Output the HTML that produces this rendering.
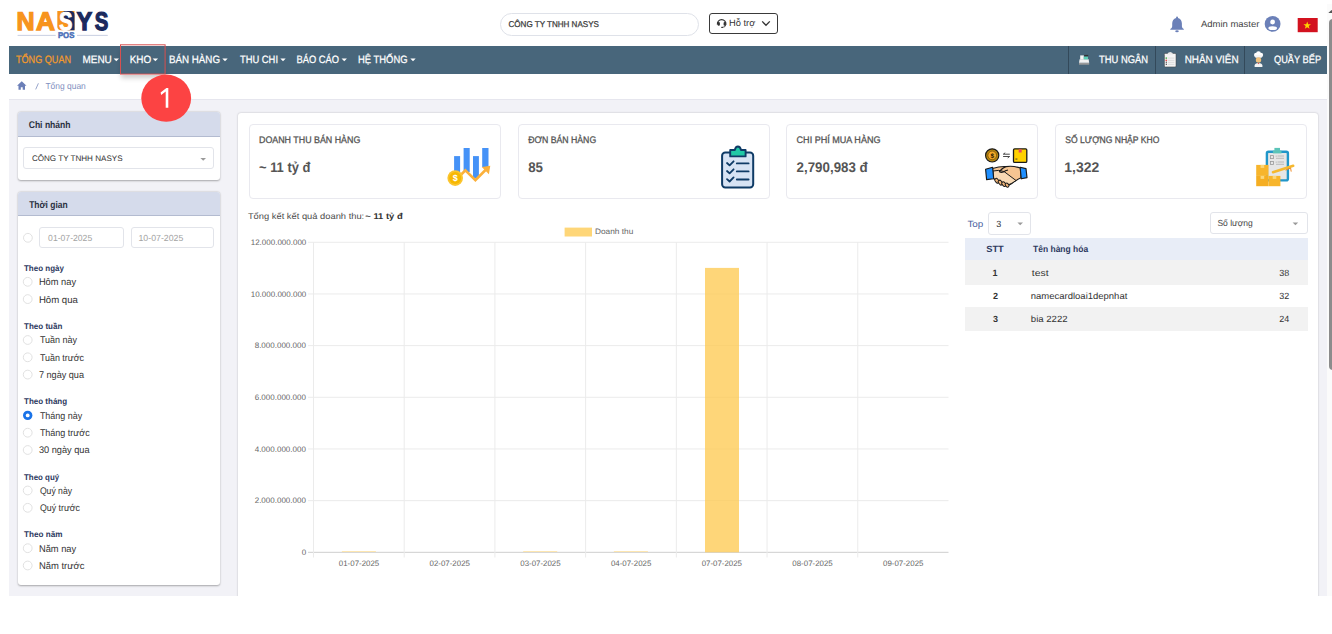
<!DOCTYPE html>
<html><head><meta charset="utf-8">
<style>
*{box-sizing:border-box;margin:0;padding:0}
html,body{width:1332px;height:634px;overflow:hidden;background:#fff;font-family:"Liberation Sans",sans-serif;color:#333}
.a{position:absolute}
.card{background:#fff;border-radius:3px;box-shadow:0 0.5px 2px rgba(0,0,0,.32)}
.ch{position:absolute;left:0;top:0;width:100%;background:#d5dbeb;border-bottom:1px solid #b3bbd0;border-radius:3px 3px 0 0}
.stat{position:absolute;top:124px;height:74.5px;border:1px solid #e9e9ef;border-radius:4px;background:#fff}
.sep{position:absolute;top:0;width:1px;height:28px;background:#33495a}
.car{position:absolute;width:0;height:0;border-left:2.5px solid transparent;border-right:2.5px solid transparent;border-top:2.7px solid #fff}
.inp{position:absolute;border:1px solid #e2e4ea;border-radius:3px;background:#fff}
svg{position:absolute;left:0;top:0;overflow:visible}
</style></head><body>

<!-- header -->
<div class="a" style="left:500px;top:13px;width:199px;height:22.5px;border:1px solid #dfe2e9;border-radius:12px"></div>
<div class="a" style="left:709px;top:13.2px;width:68.5px;height:20.5px;border:1px solid #3a3a3a;border-radius:3px"></div>

<!-- navbar -->
<div class="a" style="left:9px;top:46px;width:1318px;height:28px;background:#48667b">
 <div class="sep" style="left:1059px"></div>
 <div class="sep" style="left:1146px"></div>
 <div class="sep" style="left:1235px"></div>
</div>

<!-- content bg -->
<div class="a" style="left:9px;top:98.8px;width:1318px;height:497.4px;background:#f2f2f7;border-top:1px solid #e6e6ee"></div>
<div class="a" style="left:120.3px;top:44.5px;width:45px;height:30px;box-shadow:0 4px 5px -1px rgba(0,0,0,0.2)"></div>


<!-- sidebar cards -->
<div class="a card" style="left:17.7px;top:112.2px;width:202.4px;height:67.8px">
 <div class="ch" style="height:24.6px"></div>
 <div class="inp" style="left:5.8px;top:35px;width:191px;height:22.3px"></div>
</div>
<div class="a card" style="left:17.8px;top:192.1px;width:202.4px;height:393px">
 <div class="ch" style="height:23.5px"></div>
 <div class="inp" style="left:21.6px;top:34.7px;width:84.4px;height:21.7px"></div>
 <div class="inp" style="left:113.1px;top:34.7px;width:83.5px;height:21.7px"></div>
</div>

<!-- main panel -->
<div class="a" style="left:237.6px;top:112.9px;width:1080px;height:490px;background:#fff;border-radius:3px 3px 0 0;box-shadow:0 0 2px rgba(0,0,0,.25)"></div>
<div class="stat" style="left:249px;width:252px"></div>
<div class="stat" style="left:517.6px;width:252px"></div>
<div class="stat" style="left:785.8px;width:251.8px"></div>
<div class="stat" style="left:1054.5px;width:252.7px"></div>

<!-- table -->
<div class="inp" style="left:988.2px;top:212.3px;width:43.2px;height:22.3px"></div>
<div class="inp" style="left:1209.6px;top:212.4px;width:98px;height:22.1px"></div>
<div class="a" style="left:965px;top:237.6px;width:342.5px;height:22.5px;background:#e8edf7"></div>
<div class="a" style="left:965px;top:260.1px;width:342.5px;height:24.5px;background:#f2f2f2"></div>
<div class="a" style="left:965px;top:306.9px;width:342.5px;height:23.7px;background:#f2f2f2"></div>

<div class="a" style="left:0;top:596.2px;width:1326.5px;height:40px;background:#fff"></div>
<!-- scrollbar -->
<div class="a" style="left:1326.5px;top:3.5px;width:5.5px;height:592.5px;background:#fbfbfb"></div>
<div class="a" style="left:1329px;top:19px;width:8px;height:350.5px;background:#8c8c8c;border-radius:4px"></div>

<svg width="1332" height="634" viewBox="0 0 1332 634" style="font-family:'Liberation Sans'" text-rendering="geometricPrecision">
<line x1="308.0" y1="242.30" x2="948.5" y2="242.30" stroke="#ebebeb" stroke-width="1"/>
<line x1="308.0" y1="293.97" x2="948.5" y2="293.97" stroke="#ebebeb" stroke-width="1"/>
<line x1="308.0" y1="345.64" x2="948.5" y2="345.64" stroke="#ebebeb" stroke-width="1"/>
<line x1="308.0" y1="397.31" x2="948.5" y2="397.31" stroke="#ebebeb" stroke-width="1"/>
<line x1="308.0" y1="448.98" x2="948.5" y2="448.98" stroke="#ebebeb" stroke-width="1"/>
<line x1="308.0" y1="500.65" x2="948.5" y2="500.65" stroke="#ebebeb" stroke-width="1"/>
<line x1="308.0" y1="552.32" x2="948.5" y2="552.32" stroke="#cfcfcf" stroke-width="1"/>
<line x1="313.50" y1="242.3" x2="313.50" y2="557.5" stroke="#ebebeb" stroke-width="1"/>
<line x1="404.21" y1="242.3" x2="404.21" y2="557.5" stroke="#ebebeb" stroke-width="1"/>
<line x1="494.92" y1="242.3" x2="494.92" y2="557.5" stroke="#ebebeb" stroke-width="1"/>
<line x1="585.63" y1="242.3" x2="585.63" y2="557.5" stroke="#ebebeb" stroke-width="1"/>
<line x1="676.34" y1="242.3" x2="676.34" y2="557.5" stroke="#ebebeb" stroke-width="1"/>
<line x1="767.05" y1="242.3" x2="767.05" y2="557.5" stroke="#ebebeb" stroke-width="1"/>
<line x1="857.76" y1="242.3" x2="857.76" y2="557.5" stroke="#ebebeb" stroke-width="1"/>
<rect x="705" y="267.9" width="34" height="284.4" fill="#fec94f" fill-opacity="0.76"/>
<rect x="341.9" y="551" width="34" height="1" fill="#fde6b0"/>
<rect x="523.2" y="551" width="34" height="1" fill="#fde6b0"/>
<rect x="613.9" y="551" width="34" height="1" fill="#fde6b0"/>
<rect x="564.6" y="227.6" width="27.4" height="8.9" fill="#fed678"/>
<circle cx="27.7" cy="281.8" r="4.4" fill="#fff" stroke="#dedede" stroke-width="0.9"/>
<circle cx="27.7" cy="299.1" r="4.4" fill="#fff" stroke="#dedede" stroke-width="0.9"/>
<circle cx="27.7" cy="340.0" r="4.4" fill="#fff" stroke="#dedede" stroke-width="0.9"/>
<circle cx="27.7" cy="357.3" r="4.4" fill="#fff" stroke="#dedede" stroke-width="0.9"/>
<circle cx="27.7" cy="374.6" r="4.4" fill="#fff" stroke="#dedede" stroke-width="0.9"/>
<circle cx="27.7" cy="415.4" r="4.7" fill="#1a73e8"/><circle cx="27.7" cy="415.4" r="1.9" fill="#fff"/>
<circle cx="27.7" cy="432.7" r="4.4" fill="#fff" stroke="#dedede" stroke-width="0.9"/>
<circle cx="27.7" cy="450.0" r="4.4" fill="#fff" stroke="#dedede" stroke-width="0.9"/>
<circle cx="27.7" cy="490.5" r="4.4" fill="#fff" stroke="#dedede" stroke-width="0.9"/>
<circle cx="27.7" cy="507.8" r="4.4" fill="#fff" stroke="#dedede" stroke-width="0.9"/>
<circle cx="27.7" cy="548.2" r="4.4" fill="#fff" stroke="#dedede" stroke-width="0.9"/>
<circle cx="27.7" cy="565.5" r="4.4" fill="#fff" stroke="#dedede" stroke-width="0.9"/>
<circle cx="27.9" cy="237.8" r="4.4" fill="#fff" stroke="#dedede" stroke-width="0.9"/>
<path d="M200.39999999999998 157.9 h5.6 l-2.8 2.8z" fill="#9a9a9a"/>
<path d="M1017.4000000000001 222.5 h5.6 l-2.8 2.8z" fill="#9a9a9a"/>
<path d="M1292.6000000000001 222.5 h5.6 l-2.8 2.8z" fill="#9a9a9a"/>
<path d="M113.60 58.4 h5.4 l-2.7 2.9z" fill="#fff"/>
<path d="M152.65 58.4 h5.4 l-2.7 2.9z" fill="#fff"/>
<path d="M222.30 58.4 h5.4 l-2.7 2.9z" fill="#fff"/>
<path d="M280.30 58.4 h5.4 l-2.7 2.9z" fill="#fff"/>
<path d="M341.55 58.4 h5.4 l-2.7 2.9z" fill="#fff"/>
<path d="M410.30 58.4 h5.4 l-2.7 2.9z" fill="#fff"/>
<!-- logo -->
<path d="M57.3 10.9 H74.5 V30.3 H61.3 Q57.3 30.3 57.3 26.3 Z" fill="#f7941d"/>
<path d="M65.5 10.9 H70.5 Q74.5 10.9 74.5 14.9 V30.3 H65.5 C69.5 30.3 71.3 28 71 25.3 C70.6 22.3 63.5 20.8 61.6 18 C60.5 15.5 61.5 11.3 65.5 10.9 Z" fill="#1b2a5e"/>
<line x1="17.6" y1="35.4" x2="55.7" y2="35.4" stroke="#c3cbdf" stroke-width="0.9"/>
<line x1="77" y1="35.4" x2="107.8" y2="35.4" stroke="#c3cbdf" stroke-width="0.9"/>
<!-- hotro headset -->
<path d="M717.4 24.6 A4.3 4.3 0 1 1 725.9 24.6" fill="none" stroke="#333" stroke-width="1.1"/>
<path d="M725.9 24.6 Q725.6 27.3 722.4 27.4" fill="none" stroke="#333" stroke-width="0.8"/>
<rect x="717.6" y="21.9" width="2.3" height="3.9" rx="1" fill="#333"/>
<rect x="723.6" y="21.9" width="2.3" height="3.9" rx="1" fill="#333"/>
<rect x="721.2" y="26.7" width="1.8" height="1.2" rx="0.5" fill="#333"/>
<path d="M762.2 21.4 L766 25.3 L769.8 21.4" fill="none" stroke="#333" stroke-width="1.3"/>
<!-- bell -->
<path d="M1177 16.6 a1 1 0 0 1 1 1 v0.4 c2.6 0.7 3.9 3 3.9 5.6 v2.6 c0 1.2 0.9 2.2 1.9 2.9 v0.6 h-13.5 v-0.6 c1 -0.7 1.9 -1.7 1.9 -2.9 v-2.6 c0 -2.6 1.3 -4.9 3.9 -5.6 v-0.4 a1 1 0 0 1 0.9 -1z" fill="#6b80b8"/>
<ellipse cx="1177" cy="31.3" rx="1.8" ry="1" fill="#6b80b8"/>
<!-- avatar -->
<circle cx="1272.6" cy="23.9" r="7.9" fill="#6b80b8"/>
<circle cx="1272.6" cy="22" r="2.4" fill="#fff"/>
<ellipse cx="1272.7" cy="28.2" rx="4.3" ry="1.9" fill="#fff"/>
<!-- flag -->
<rect x="1297.7" y="18" width="20" height="14.2" fill="#d3121f"/>
<path d="M1307.20 21.60 L1308.14 24.31 L1311.00 24.36 L1308.72 26.09 L1309.55 28.84 L1307.20 27.20 L1304.85 28.84 L1305.68 26.09 L1303.40 24.36 L1306.26 24.31 Z" fill="#ffd400"/>
<!-- register -->
<rect x="1079" y="62.8" width="10.2" height="1.9" fill="#9a9a9a"/>
<path d="M1079 62.8 L1079.6 59.2 H1088.6 L1089.2 62.8 Z" fill="#f3f3f3"/>
<rect x="1080.2" y="55.4" width="3.6" height="4" fill="#f5f5f5"/>
<rect x="1083.8" y="56.6" width="4.2" height="2.7" fill="#5ccfb5"/>
<rect x="1084.2" y="54.9" width="4" height="1.3" fill="#333"/>
<!-- clipboard list -->
<rect x="1164.4" y="53.4" width="11.6" height="13.5" rx="0.8" fill="#f4f4f4" stroke="#3c3c3c" stroke-width="0.5"/>
<path d="M1167.3 54.5 Q1167.5 52 1170.2 51.9 Q1172.9 52 1173.1 54.5 Z" fill="#e8e8e8"/>
<circle cx="1166.3" cy="58.1" r="0.9" fill="#4caf50"/>
<circle cx="1166.3" cy="60.3" r="0.9" fill="#e84c4c"/>
<circle cx="1166.3" cy="62.3" r="0.7" fill="#555"/>
<circle cx="1166.3" cy="64.3" r="0.7" fill="#444"/>
<g stroke="#c8c8c8" stroke-width="0.6"><line x1="1168" y1="58.1" x2="1174.3" y2="58.1"/><line x1="1168" y1="60.3" x2="1174.3" y2="60.3"/><line x1="1168" y1="62.3" x2="1174.3" y2="62.3"/><line x1="1168" y1="64.3" x2="1174.3" y2="64.3"/></g>
<!-- chef -->
<circle cx="1256.2" cy="54.9" r="2.2" fill="#fff"/>
<circle cx="1258.5" cy="53.7" r="2.4" fill="#fff"/>
<circle cx="1260.9" cy="54.9" r="2.2" fill="#fff"/>
<rect x="1255.4" y="55" width="6.3" height="2.8" fill="#f6f6f6"/>
<circle cx="1258.5" cy="59.9" r="2.7" fill="#f1c27d"/>
<path d="M1254.6 67.1 V65.5 Q1254.8 63.3 1258.5 63 Q1262.2 63.3 1262.4 65.5 V67.1 Z" fill="#f5f5f5"/>
<path d="M1257.6 63 h1.8 l-0.9 1.2z" fill="#d83a3a"/>
<line x1="38.4" y1="83.3" x2="35.7" y2="89.4" stroke="#8d9cc6" stroke-width="0.9"/>
<!-- home -->
<path d="M21.75 81.3 L26.5 85.8 H25 V89.8 H22.7 V87.2 H20.8 V89.8 H18.5 V85.8 H17 Z" fill="#6b7fb8"/>
<!-- stat icon 1 -->
<g transform="translate(440 140)">
 <rect x="14.1" y="16.1" width="6" height="17" fill="#4592f7"/>
 <rect x="23.6" y="8" width="6.1" height="24" fill="#4592f7"/>
 <rect x="33" y="16.1" width="5.9" height="22" fill="#4592f7"/>
 <rect x="42.2" y="8" width="6.3" height="19" fill="#4592f7"/>
 <polyline points="21.5,34.2 25.4,30.4 35.4,40.1 46,29.5" fill="none" stroke="#fbb03b" stroke-width="2.6"/>
 <path d="M50.3 25.7 L41.8 27.1 L48.9 34.2 Z" fill="#fbb03b"/>
 <circle cx="15.2" cy="38.1" r="7.8" fill="#fbc52f"/>
 <circle cx="15.2" cy="38.1" r="6" fill="#f7b800"/>
 <text x="15.2" y="41.3" font-size="9" font-weight="bold" fill="#fff" text-anchor="middle">$</text>
</g>
<!-- stat icon 2 -->
<g transform="translate(715 140)">
 <rect x="7.1" y="12.5" width="31.1" height="35" rx="3.2" fill="#d7e3f4" stroke="#0f3b66" stroke-width="2"/>
 <path d="M15.2 16.4 V10 H19.8 Q20.5 6.5 22.9 6.5 Q25.3 6.5 26 10 H30.6 V16.4 Z" fill="#20c9a6" stroke="#0f3b66" stroke-width="1.9" stroke-linejoin="round"/>
 <g fill="none" stroke="#0f3b66" stroke-width="1.8" stroke-linecap="round" stroke-linejoin="round">
  <polyline points="12,23 14.6,25.4 18.6,21.3"/><polyline points="12,31 14.6,33.4 18.6,29.3"/><polyline points="12,39.1 14.6,41.5 18.6,37.4"/>
  <line x1="21.8" y1="23.4" x2="33.6" y2="23.4"/><line x1="21.8" y1="31.4" x2="33.6" y2="31.4"/><line x1="21.8" y1="39.5" x2="33.6" y2="39.5"/>
 </g>
</g>
<!-- stat icon 3 -->
<g transform="translate(980 142)">
 <circle cx="12.2" cy="13.4" r="6.6" fill="#b8870f" stroke="#1a1a1a" stroke-width="1.2"/>
 <circle cx="12.2" cy="13.4" r="4.3" fill="#f7a928" stroke="#3a2a00" stroke-width="0.5"/>
 <text x="12.2" y="15.8" font-size="6.5" font-weight="bold" fill="#2a1a00" text-anchor="middle">$</text>
 <g fill="none" stroke="#333" stroke-width="0.9"><path d="M23.3 12.2 h6.5 M23.3 12.2 l1.9 -1.4"/><path d="M23.1 14.5 h6.5 l-1.9 1.4"/></g>
 <rect x="33.5" y="6.8" width="13.3" height="13.6" rx="1.2" fill="#ffd100" stroke="#1a1a1a" stroke-width="1.3"/>
 <rect x="38.7" y="7.2" width="3" height="3.3" fill="#e84b5a"/>
 <rect x="35.4" y="16.6" width="2" height="0.9" fill="#333"/>
 <path d="M12.5 26.5 Q20 24.2 26 24.6 Q33 23.5 40.4 26 L41 35.8 Q36 38 31 42 Q28 44.2 24 42.5 L13.5 36.5 Z" fill="#f6c592" stroke="#1a1a1a" stroke-width="1.15" stroke-linejoin="round"/>
 <path d="M13 29 Q19 27.5 24 29.5 L36 38.5 Q32 41.5 28 43 L13.5 36.5 Z" fill="#f8d9b4" stroke="#1a1a1a" stroke-width="1"/>
 <path d="M26 24.6 Q21 27 19.5 29.8 Q22 31.5 25.5 28.8 L28 28" fill="none" stroke="#1a1a1a" stroke-width="1.15"/>
 <g fill="#f3b77a" stroke="#1a1a1a" stroke-width="1"><rect x="15.3" y="36.2" width="3.2" height="5" rx="1.5" transform="rotate(-40 17 38.7)"/><rect x="18.8" y="38" width="3.2" height="5.2" rx="1.5" transform="rotate(-40 20.4 40.6)"/><rect x="22.3" y="39.6" width="3.2" height="5" rx="1.5" transform="rotate(-40 23.9 42.1)"/><rect x="25.6" y="41" width="3" height="4.2" rx="1.4" transform="rotate(-40 27.1 43.1)"/></g>
 <path d="M5.6 27.3 L12.6 25.3 L13.7 36.8 L6.6 37.6 Z" fill="#1e8fff" stroke="#1a1a1a" stroke-width="1.15" stroke-linejoin="round"/>
 <path d="M40.1 25.3 L46 26.6 L47 35.6 L41.3 36.8 Z" fill="#1e8fff" stroke="#1a1a1a" stroke-width="1.15" stroke-linejoin="round"/>
</g>
<!-- stat icon 4 -->
<g transform="translate(1250 142)">
 <rect x="16.9" y="9.8" width="21" height="28.6" rx="1.6" fill="#e6e6e6" stroke="#2196c9" stroke-width="2.4"/>
 <rect x="22.9" y="8.6" width="8.6" height="2.8" fill="#5bc4b8"/>
 <rect x="24.4" y="5.9" width="5.6" height="3" fill="#5bc4b8"/>
 <g fill="none" stroke="#9a9a9a" stroke-width="0.8"><rect x="20.5" y="13.6" width="3" height="3"/><rect x="20.5" y="19.5" width="3" height="3"/>
 </g><g stroke="#9a9a9a" stroke-width="0.6"><line x1="27.5" y1="14" x2="34" y2="14"/><line x1="26" y1="16.3" x2="34" y2="16.3"/><line x1="27.5" y1="20" x2="34" y2="20"/><line x1="26" y1="22.3" x2="34" y2="22.3"/><line x1="26.2" y1="13.5" x2="26.2" y2="14.8"/><line x1="26.2" y1="19.5" x2="26.2" y2="20.8"/></g>
 <rect x="6.2" y="22.9" width="12.3" height="11" fill="#f7b52c"/>
 <rect x="6.2" y="33.9" width="12.3" height="10.3" fill="#f5ae22"/>
 <rect x="18.5" y="33.9" width="11.9" height="10.3" fill="#f7b52c"/>
 <rect x="10.6" y="22.9" width="3.6" height="3" fill="#fbd77a"/>
 <rect x="10.6" y="33.9" width="3.6" height="3" fill="#fbd77a"/>
 <rect x="22.7" y="33.9" width="3.6" height="3" fill="#fbd77a"/>
 <line x1="23" y1="30.2" x2="43.2" y2="23.8" stroke="#f5b82e" stroke-width="2.6" stroke-linecap="round"/>
 <path d="M35.6 28.2 L40.6 26 L41.2 29.6" fill="none" stroke="#f08a24" stroke-width="1"/>
</g>
<path d="M1328.3 12.9 L1331.5 10 L1334.7 12.9 Z" fill="#555"/>
<!-- red box & badge -->
<rect x="120.5" y="44.8" width="44.6" height="29.3" fill="none" stroke="#d85050" stroke-width="1"/>
<ellipse cx="166.2" cy="98.2" rx="24.9" ry="23.6" fill="#fc4343"/>
<path d="M165.7 107.8 V91.4 L161.2 95 L160.6 92.6 L166.4 87.9 H168.3 V107.8 Z" fill="#fff"/>

<text x="16.40" y="29.80" font-size="25.5" font-weight="bold" textLength="18.04" lengthAdjust="spacingAndGlyphs" stroke="#f7941d" stroke-width="1.3" fill="#f7941d">N</text><text x="36.10" y="29.80" font-size="25.5" font-weight="bold" textLength="19.00" lengthAdjust="spacingAndGlyphs" stroke="#f7941d" stroke-width="1.3" fill="#f7941d">A</text><text x="59.30" y="29.80" font-size="25.5" font-weight="bold" textLength="13.13" lengthAdjust="spacingAndGlyphs" stroke="#fff" stroke-width="1.0" fill="#fff">S</text><text x="76.70" y="29.80" font-size="25.5" font-weight="bold" textLength="15.41" lengthAdjust="spacingAndGlyphs" stroke="#1b2a5e" stroke-width="1.3" fill="#1b2a5e">Y</text><text x="94.70" y="29.80" font-size="25.5" font-weight="bold" textLength="13.52" lengthAdjust="spacingAndGlyphs" stroke="#1b2a5e" stroke-width="1.3" fill="#1b2a5e">S</text><text x="57.90" y="38.40" font-size="8.4" font-weight="bold" textLength="16.52" lengthAdjust="spacingAndGlyphs" stroke="#4a70b8" stroke-width="0.5" fill="#4a70b8">POS</text><text x="508.50" y="27.20" font-size="8.5" textLength="90.40" lengthAdjust="spacingAndGlyphs" stroke="#3a3a3a" stroke-width="0.25" fill="#3a3a3a">CÔNG TY TNHH NASYS</text><text x="729.00" y="26.40" font-size="9.2" textLength="26.36" lengthAdjust="spacingAndGlyphs" fill="#333">Hỗ trợ</text><text x="1201.00" y="27.40" font-size="9" textLength="58.41" lengthAdjust="spacingAndGlyphs" fill="#444">Admin master</text><text x="16.00" y="63.00" font-size="10.6" textLength="55.00" lengthAdjust="spacingAndGlyphs" stroke="#f39a2c" stroke-width="0.25" fill="#f39a2c">TỔNG QUAN</text><text x="82.50" y="63.00" font-size="10.6" textLength="29.30" lengthAdjust="spacingAndGlyphs" stroke="#fff" stroke-width="0.25" fill="#fff">MENU</text><text x="129.70" y="63.00" font-size="10.6" textLength="21.50" lengthAdjust="spacingAndGlyphs" stroke="#fff" stroke-width="0.25" fill="#fff">KHO</text><text x="169.00" y="63.00" font-size="10.6" textLength="51.02" lengthAdjust="spacingAndGlyphs" stroke="#fff" stroke-width="0.25" fill="#fff">BÁN HÀNG</text><text x="240.00" y="63.00" font-size="10.6" textLength="38.00" lengthAdjust="spacingAndGlyphs" stroke="#fff" stroke-width="0.25" fill="#fff">THU CHI</text><text x="296.50" y="63.00" font-size="10.6" textLength="42.54" lengthAdjust="spacingAndGlyphs" stroke="#fff" stroke-width="0.25" fill="#fff">BÁO CÁO</text><text x="358.00" y="63.00" font-size="10.6" textLength="49.54" lengthAdjust="spacingAndGlyphs" stroke="#fff" stroke-width="0.25" fill="#fff">HỆ THỐNG</text><text x="1099.00" y="62.80" font-size="10.6" textLength="49.00" lengthAdjust="spacingAndGlyphs" stroke="#fff" stroke-width="0.25" fill="#fff">THU NGÂN</text><text x="1184.70" y="62.80" font-size="10.6" textLength="53.94" lengthAdjust="spacingAndGlyphs" stroke="#fff" stroke-width="0.25" fill="#fff">NHÂN VIÊN</text><text x="1274.00" y="62.80" font-size="10.6" textLength="47.11" lengthAdjust="spacingAndGlyphs" stroke="#fff" stroke-width="0.25" fill="#fff">QUẦY BẾP</text><text x="45.40" y="88.90" font-size="8.8" textLength="40.41" lengthAdjust="spacingAndGlyphs" fill="#7f8fc0">Tổng quan</text><text x="28.70" y="127.90" font-size="9.8" font-weight="bold" textLength="41.91" lengthAdjust="spacingAndGlyphs" fill="#2a3040">Chi nhánh</text><text x="31.90" y="160.80" font-size="8.1" textLength="90.70" lengthAdjust="spacingAndGlyphs" fill="#333">CÔNG TY TNHH NASYS</text><text x="29.20" y="207.90" font-size="9.8" font-weight="bold" textLength="38.41" lengthAdjust="spacingAndGlyphs" fill="#2a3040">Thời gian</text><text x="48.10" y="241.00" font-size="8.8" textLength="44.11" lengthAdjust="spacingAndGlyphs" fill="#a3a3a3">01-07-2025</text><text x="138.50" y="241.00" font-size="8.8" textLength="44.76" lengthAdjust="spacingAndGlyphs" fill="#a3a3a3">10-07-2025</text><text x="24.00" y="270.80" font-size="8.3" font-weight="bold" textLength="39.91" lengthAdjust="spacingAndGlyphs" fill="#2d3960">Theo ngày</text><text x="38.90" y="285.20" font-size="9.7" textLength="37.14" lengthAdjust="spacingAndGlyphs" fill="#333">Hôm nay</text><text x="38.90" y="302.50" font-size="9.7" textLength="38.96" lengthAdjust="spacingAndGlyphs" fill="#333">Hôm qua</text><text x="24.00" y="329.00" font-size="8.3" font-weight="bold" textLength="38.30" lengthAdjust="spacingAndGlyphs" fill="#2d3960">Theo tuần</text><text x="39.90" y="343.40" font-size="9.7" textLength="37.11" lengthAdjust="spacingAndGlyphs" fill="#333">Tuần này</text><text x="39.90" y="360.70" font-size="9.7" textLength="44.11" lengthAdjust="spacingAndGlyphs" fill="#333">Tuần trước</text><text x="38.90" y="378.00" font-size="9.7" textLength="45.13" lengthAdjust="spacingAndGlyphs" fill="#333">7 ngày qua</text><text x="24.00" y="404.40" font-size="8.3" font-weight="bold" textLength="43.11" lengthAdjust="spacingAndGlyphs" fill="#2d3960">Theo tháng</text><text x="39.90" y="418.80" font-size="9.7" textLength="42.30" lengthAdjust="spacingAndGlyphs" fill="#333">Tháng này</text><text x="39.90" y="436.10" font-size="9.7" textLength="49.81" lengthAdjust="spacingAndGlyphs" fill="#333">Tháng trước</text><text x="38.90" y="453.40" font-size="9.7" textLength="50.64" lengthAdjust="spacingAndGlyphs" fill="#333">30 ngày qua</text><text x="24.00" y="479.50" font-size="8.3" font-weight="bold" textLength="35.11" lengthAdjust="spacingAndGlyphs" fill="#2d3960">Theo quý</text><text x="39.90" y="493.90" font-size="9.7" textLength="32.11" lengthAdjust="spacingAndGlyphs" fill="#333">Quý này</text><text x="39.90" y="511.20" font-size="9.7" textLength="40.11" lengthAdjust="spacingAndGlyphs" fill="#333">Quý trước</text><text x="24.00" y="537.20" font-size="8.3" font-weight="bold" textLength="38.41" lengthAdjust="spacingAndGlyphs" fill="#2d3960">Theo năm</text><text x="38.90" y="551.60" font-size="9.7" textLength="37.34" lengthAdjust="spacingAndGlyphs" fill="#333">Năm nay</text><text x="38.90" y="568.90" font-size="9.7" textLength="45.47" lengthAdjust="spacingAndGlyphs" fill="#333">Năm trước</text><text x="259.00" y="142.90" font-size="9.5" textLength="101.30" lengthAdjust="spacingAndGlyphs" stroke="#555" stroke-width="0.3" fill="#555">DOANH THU BÁN HÀNG</text><text x="259.00" y="172.00" font-size="14" font-weight="bold" textLength="51.40" lengthAdjust="spacingAndGlyphs" fill="#555">~ 11 tỷ đ</text><text x="528.20" y="142.90" font-size="9.5" textLength="68.00" lengthAdjust="spacingAndGlyphs" stroke="#555" stroke-width="0.3" fill="#555">ĐƠN BÁN HÀNG</text><text x="528.20" y="172.00" font-size="14" font-weight="bold" textLength="14.82" lengthAdjust="spacingAndGlyphs" fill="#555">85</text><text x="796.60" y="142.90" font-size="9.5" textLength="83.90" lengthAdjust="spacingAndGlyphs" stroke="#555" stroke-width="0.3" fill="#555">CHI PHÍ MUA HÀNG</text><text x="796.60" y="172.00" font-size="14" font-weight="bold" textLength="71.11" lengthAdjust="spacingAndGlyphs" fill="#555">2,790,983 đ</text><text x="1065.30" y="142.90" font-size="9.5" textLength="94.00" lengthAdjust="spacingAndGlyphs" stroke="#555" stroke-width="0.3" fill="#555">SỐ LƯỢNG NHẬP KHO</text><text x="1064.30" y="172.00" font-size="14" font-weight="bold" textLength="34.86" lengthAdjust="spacingAndGlyphs" fill="#555">1,322</text><text x="247.90" y="218.60" font-size="8.5" textLength="116.33" lengthAdjust="spacingAndGlyphs" fill="#4d4d4d">Tổng kết kết quả doanh thu:</text><text x="365.30" y="218.60" font-size="8.5" font-weight="bold" textLength="37.34" lengthAdjust="spacingAndGlyphs" fill="#333">~ 11 tỷ đ</text><text x="250.70" y="245.05" font-size="8.0" fill="#666">12.000.000.000</text><text x="250.70" y="296.72" font-size="8.0" fill="#666">10.000.000.000</text><text x="254.70" y="348.39" font-size="8.0" fill="#666">8.000.000.000</text><text x="254.70" y="400.06" font-size="8.0" fill="#666">6.000.000.000</text><text x="254.70" y="451.73" font-size="8.0" fill="#666">4.000.000.000</text><text x="254.70" y="503.40" font-size="8.0" fill="#666">2.000.000.000</text><text x="301.70" y="555.07" font-size="8.0" fill="#666">0</text><text x="338.85" y="566.30" font-size="7.9" fill="#666">01-07-2025</text><text x="429.55" y="566.30" font-size="7.9" fill="#666">02-07-2025</text><text x="520.25" y="566.30" font-size="7.9" fill="#666">03-07-2025</text><text x="610.95" y="566.30" font-size="7.9" fill="#666">04-07-2025</text><text x="701.65" y="566.30" font-size="7.9" fill="#666">07-07-2025</text><text x="792.35" y="566.30" font-size="7.9" fill="#666">08-07-2025</text><text x="883.05" y="566.30" font-size="7.9" fill="#666">09-07-2025</text><text x="595.00" y="234.30" font-size="7.9" textLength="38.28" lengthAdjust="spacingAndGlyphs" fill="#666">Doanh thu</text><text x="967.40" y="226.80" font-size="9" textLength="15.96" lengthAdjust="spacingAndGlyphs" fill="#4a5fa0">Top</text><text x="996.30" y="227.00" font-size="9" fill="#333">3</text><text x="1217.40" y="226.40" font-size="8.8" textLength="35.34" lengthAdjust="spacingAndGlyphs" fill="#444">Số lượng</text><text x="986.20" y="252.20" font-size="9" font-weight="bold" textLength="17.55" lengthAdjust="spacingAndGlyphs" fill="#2d3960">STT</text><text x="1033.10" y="252.20" font-size="9" font-weight="bold" textLength="55.00" lengthAdjust="spacingAndGlyphs" fill="#2d3960">Tên hàng hóa</text><text x="992.50" y="275.90" font-size="9" font-weight="bold" fill="#333">1</text><text x="1031.80" y="275.90" font-size="9" textLength="16.75" lengthAdjust="spacingAndGlyphs" fill="#333">test</text><text x="1279.20" y="275.90" font-size="9" fill="#333">38</text><text x="993.00" y="299.10" font-size="9" font-weight="bold" fill="#333">2</text><text x="1030.80" y="299.10" font-size="9" textLength="96.52" lengthAdjust="spacingAndGlyphs" fill="#333">namecardloai1depnhat</text><text x="1279.20" y="299.10" font-size="9" fill="#333">32</text><text x="993.00" y="322.30" font-size="9" font-weight="bold" fill="#333">3</text><text x="1030.80" y="322.30" font-size="9" textLength="36.86" lengthAdjust="spacingAndGlyphs" fill="#333">bia 2222</text><text x="1279.20" y="322.30" font-size="9" fill="#333">24</text>
</svg>
</body></html>
